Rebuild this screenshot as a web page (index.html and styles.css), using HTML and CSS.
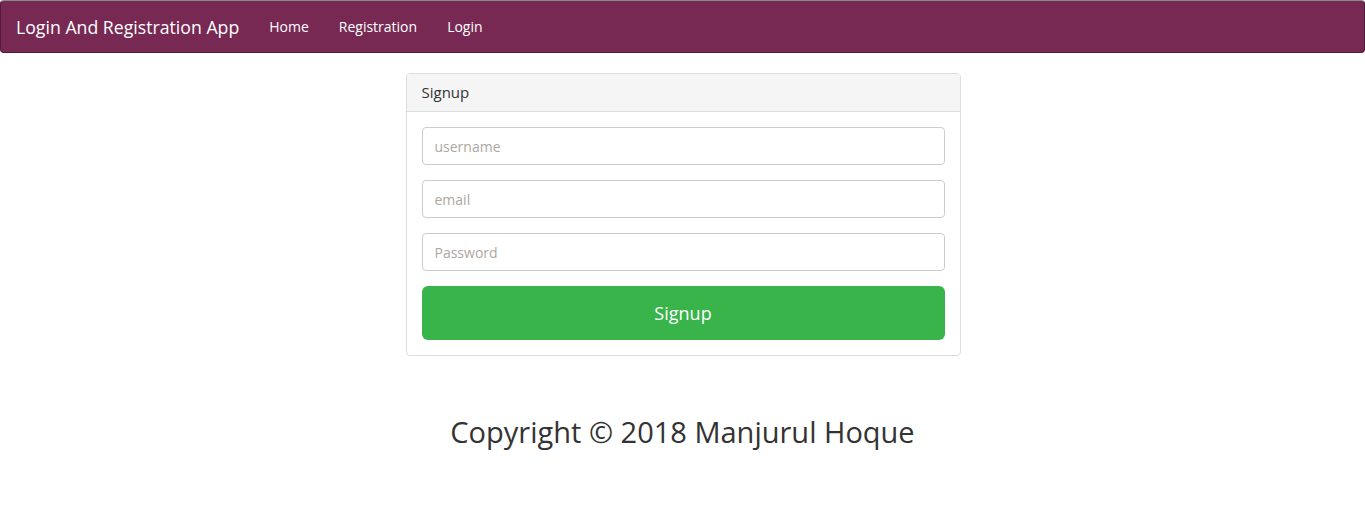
FILE: index.html
```html
<!DOCTYPE html>
<html lang="en">
<head>
<meta charset="utf-8">
<title>Login And Registration App</title>
<link rel="stylesheet" href="styles.css">
</head>
<body>
<nav class="navbar">
  <a class="brand" href="#">Login And Registration App</a>
  <ul class="nav">
    <li><a href="#">Home</a></li>
    <li><a href="#">Registration</a></li>
    <li><a href="#">Login</a></li>
  </ul>
</nav>
<main class="main">
  <section class="panel">
    <div class="panel-heading">Signup</div>
    <form class="panel-body">
      <input class="form-control" type="text" placeholder="username">
      <input class="form-control" type="email" placeholder="email">
      <input class="form-control" type="password" placeholder="Password">
      <button class="btn-signup" type="button">Signup</button>
    </form>
  </section>
</main>
<footer class="footer">Copyright © 2018 Manjurul Hoque</footer>
</body>
</html>
```
FILE: styles.css
```css
* { box-sizing: border-box; }
body {
  margin: 0;
  font-family: "Open Sans", "Noto Sans", sans-serif;
  font-size: 14px;
  color: #333;
  background: #fff;
}
.navbar {
  display: flex;
  align-items: center;
  height: 53px;
  background: #772953;
  border: 1px solid #511c39;
  border-top-color: #8a8a8a;
  border-radius: 4px;
  padding: 0 15px;
}
.brand {
  color: #fff;
  text-decoration: none;
  font-size: 17.7px;
  line-height: 20px;
  margin-right: 15px;
}
.nav {
  display: flex;
  list-style: none;
  margin: 0;
  padding: 0;
}
.nav a {
  display: block;
  padding: 15px;
  color: #fff;
  text-decoration: none;
  font-size: 14px;
  line-height: 20px;
}
.main {
  padding-top: 20px;
  padding-left: 1px;
}
.panel {
  width: 555px;
  margin: 0 auto;
  border: 1px solid #ddd;
  border-radius: 4px;
  background: #fff;
}
.panel-heading {
  background: #f5f5f5;
  border-bottom: 1px solid #ddd;
  padding: 9px 15px;
  font-size: 15px;
  line-height: 19px;
  color: #333;
  border-radius: 3px 3px 0 0;
}
.panel-body {
  display: flex;
  flex-direction: column;
  gap: 15px;
  padding: 15px;
  margin: 0;
}
.form-control {
  display: block;
  width: 100%;
  height: 38px;
  padding: 6px 12px;
  font-family: inherit;
  font-size: 14px;
  color: #333;
  border: 1px solid #ccc;
  border-radius: 4px;
  background: #fff;
  outline: none;
}
.form-control::placeholder { color: #aea79f; }
.btn-signup {
  display: block;
  width: 100%;
  height: 54px;
  border: 0;
  border-radius: 6px;
  background: #38b44a;
  color: #fff;
  font-family: inherit;
  font-size: 18px;
}
.footer {
  text-align: center;
  font-size: 29px;
  line-height: 36px;
  margin-top: 58px;
  color: #333;
}
```
